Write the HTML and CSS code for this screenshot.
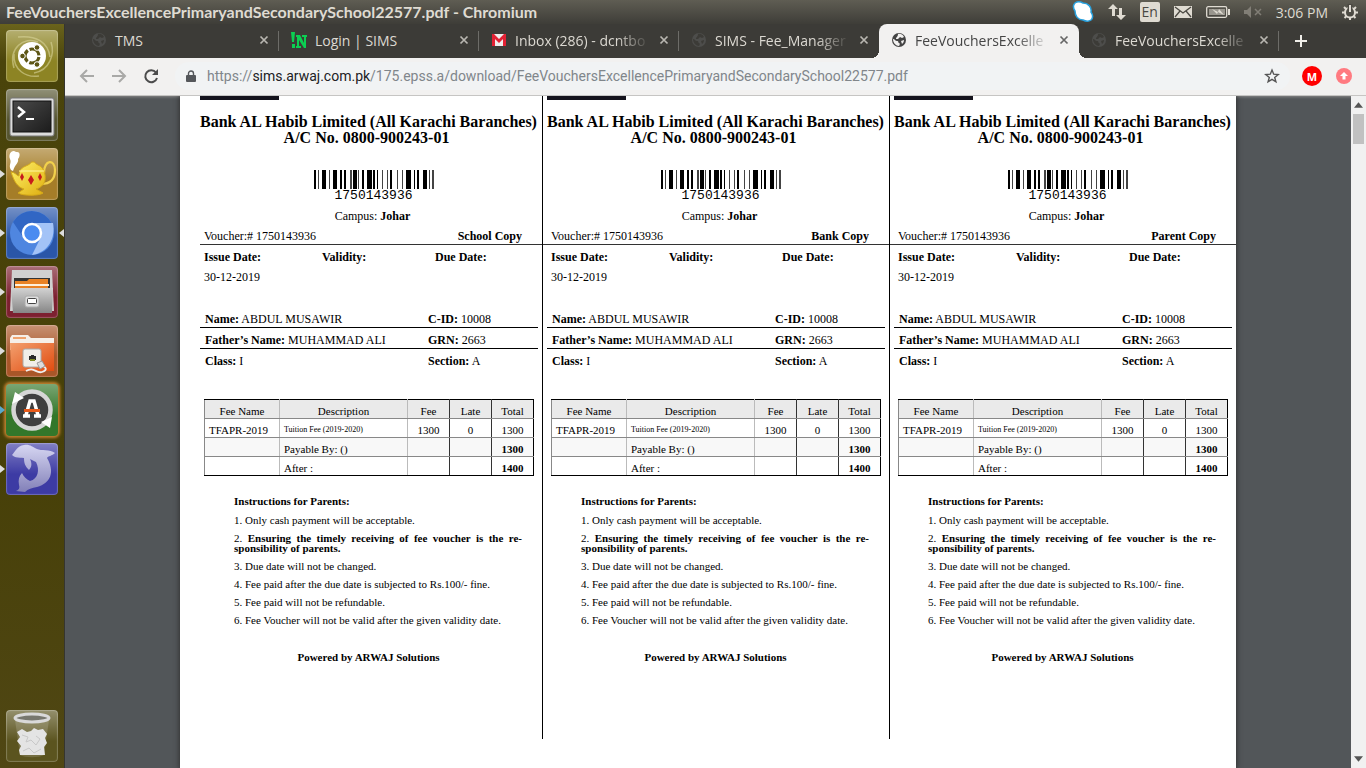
FILE: index.html
```html
<!DOCTYPE html>
<html lang="en">
<head>
<meta charset="utf-8">
<title>FeeVouchersExcellencePrimaryandSecondarySchool22577.pdf</title>
<link rel="stylesheet" href="styles.css">
</head>
<body>
<svg class="defs" aria-hidden="true">
  <defs>
    <linearGradient id="steel" x1="0" y1="0" x2="0" y2="1"><stop offset="0" stop-color="#d2d2d2"/><stop offset="1" stop-color="#868686"/></linearGradient>
    <linearGradient id="screen" x1="0" y1="0" x2="1" y2="1"><stop offset="0" stop-color="#4a4a4a"/><stop offset="1" stop-color="#1c1c1c"/></linearGradient>
    <linearGradient id="gold" x1="0" y1="0" x2="1" y2="1"><stop offset="0" stop-color="#fff36a"/><stop offset="1" stop-color="#dfae10"/></linearGradient>
    <linearGradient id="orange" x1="0" y1="0" x2="1" y2="1"><stop offset="0" stop-color="#f3a06f"/><stop offset="1" stop-color="#e04c10"/></linearGradient>
    <linearGradient id="whale" x1="0" y1="0" x2="0" y2="1"><stop offset="0" stop-color="#d6d6f2"/><stop offset="1" stop-color="#8280b8"/></linearGradient>
    <symbol id="globe" viewBox="0 0 16 16"><circle cx="8" cy="8" r="7" fill="currentColor"/><path class="land" d="M2 7c2 0 2 2 4 2s1 2 2 2 1 2 0 3c-3 0-6-3-6-7zM7 2c2-.6 5 .5 6 3l-2 1-2-1-2 2H5c0-2 2-2 2-5zM10 9l3-1c0 2-1 3-2 4z"/></symbol>
    <symbol id="cross" viewBox="0 0 10 10"><path d="M1.500 1.500l7 7M8.500 1.500l-7 7" stroke="currentColor" stroke-width="1.700" fill="none"/></symbol>
    <symbol id="barcode" viewBox="0 0 120 19" preserveAspectRatio="none">
      <path d="M0 0h2v19H0zM8 0h4v19H8zM19 0h4v19h-4zM26 0h2v19h-2zM30 0h2v19h-2zM39 0h4v19h-4zM48 0h2v19h-2zM53 0h5v19h-5zM59 0h2v19h-2zM63 0h1v19h-1zM76 0h2v19h-2zM92 0h5v19h-5zM100 0h1v19h-1zM103 0h2v19h-2zM109 0h4v19h-4z" fill="#000"/>
      <path d="M4 0h1v19H4zM15 0h1v19h-1zM36 0h2v19h-2zM44 0h1v19h-1zM68 0h1v19h-1zM73 0h1v19h-1zM83 0h1v19h-1zM88 0h1v19h-1zM115 0h1v19h-1zM118 0h2v19h-2z" fill="#444"/>
    </symbol>
  </defs>
</svg>

<header class="panel">
  <span class="panel-title">FeeVouchersExcellencePrimaryandSecondarySchool22577.pdf - Chromium</span>
  <div class="indicators">
    <svg width="22" height="22" viewBox="0 0 22 22"><path d="M3 2c3-2 6-1 8 0 5 0 9 4 8 9 2 3 2 6 0 8-3 2-6 1-8 0-5 0-8-4-8-9-2-3-2-6 0-8z" fill="#fff" stroke="#29a0dc" stroke-width="1.500"/></svg>
    <svg width="18" height="18" viewBox="0 0 18 18" fill="#dfdbd2"><path d="M5 1l5 5H7v7H4V6H0zM13 17l-5-5h3V5h3v7h4z"/></svg>
    <span class="lang">En</span>
    <svg width="18" height="12" viewBox="0 0 18 12"><path fill="#dfdbd2" d="M0 0h18v12H0z"/><path d="M1 1l8 6 8-6M1 11l5-6M17 11l-5-6" fill="none" stroke="#4a4842" stroke-width="1.300"/></svg>
    <svg width="24" height="12" viewBox="0 0 24 12"><rect x=".7" y=".7" width="20" height="10.600" rx="1.500" fill="none" stroke="#dfdbd2" stroke-width="1.300"/><path fill="#99968e" d="M3 3h16v6H3z"/><path fill="#dfdbd2" d="M22 3h2v6h-2zM6 3l6 3 1-3 5 6-6-3-1 2z"/></svg>
    <svg width="18" height="12" viewBox="0 0 18 12"><path d="M0 4h3l4-4v12L3 8H0z" fill="#817e76"/><path d="M11 3l6 6M17 3l-6 6" stroke="#817e76" stroke-width="1.500"/></svg>
    <time class="clock">3:06 PM</time>
    <svg width="16" height="16" viewBox="0 0 16 16"><circle cx="8" cy="8.500" r="5" fill="none" stroke="#dfdbd2" stroke-width="2"/><path d="M5.500 0h5v7h-5z" fill="#4c4a43"/><path d="M8 1v7M0 8.500h3M13 8.500h3M2.500 14l2-2M13.500 14l-2-2M8 14v2M2 3l2 2M14 3l-2 2" stroke="#dfdbd2" stroke-width="2"/></svg>
  </div>
</header>

<div class="desktop">
  <nav class="launcher" aria-label="Launcher">
    <button class="tile dash" aria-label="Dash"><svg viewBox="0 0 52 52"><path d="M8 38C2 18 18 6 32 12M45 12c4 12-1 28-17 31M12 7c18-2 30 5 32 20M8 24c-1 16 12 24 25 22" fill="none" stroke="#d8d49a" stroke-width="1.500" opacity=".6"/><circle cx="26" cy="26" r="14" fill="#fff"/><circle cx="26" cy="26" r="7" fill="none" stroke="#5d5514" stroke-width="3.200" stroke-dasharray="12.660 2" stroke-dashoffset="-1"/><g fill="#5d5514" stroke="#fff" stroke-width="1"><circle cx="16.500" cy="26" r="2.800"/><circle cx="31" cy="17.500" r="2.800"/><circle cx="31" cy="34.500" r="2.800"/></g></svg></button>
    <button class="tile term" aria-label="Terminal"><svg viewBox="0 0 52 52"><rect x="4" y="9" width="44" height="38" rx="2" fill="#dcdcdc" stroke="#777"/><rect x="7" y="12" width="38" height="31" fill="url(#screen)" stroke="#111"/><path d="M12 18l6 5-6 5" fill="none" stroke="#fff" stroke-width="2.500"/><path d="M20 30h8" stroke="#fff" stroke-width="2"/></svg></button>
    <button class="tile lamp running" aria-label="Teapot"><svg viewBox="0 0 52 52"><path d="M5 22c-3-5 1-7-1-11C2 6 6 1 10 4c5-1 4 5 2 7 1 4-3 5-5 12z" fill="#fff"/><path d="M38 25c0-14 11-14 11-3 0 9-5 14-14 14" fill="none" stroke="#f1d04c" stroke-width="2.200"/><path d="M5 24c4 0 6 4 8 4 0-8 5-9 9-11 4-2 2-3 5-3s1 1 5 3c5 2 8 8 7 15-1 5-5 8-9 9l7 4c-4 3-20 3-25 0l6-4C11 39 8 33 5 24z" fill="url(#gold)" stroke="#d6aa18"/><path d="M13 23h25" stroke="#fff7a0" stroke-width="1"/><path d="M16 25l2 4-2 4-2-4zM25 27l3 5-3 5-3-5zM34 25l2 4-2 4-2-4z" fill="#c71b1b"/></svg></button>
    <button class="tile chrome running focused" aria-label="Chromium"><svg viewBox="0 0 52 52"><circle cx="26" cy="26" r="22" fill="#4f86e0"/><path d="M7 15a22 22 0 0 1 39 2H26a10 10 0 0 0-9 13z" fill="#3166c4"/><path d="M26 16h21c3 15-5 30-21 32l9-18a10 10 0 0 0-9-14z" fill="#a3c3f7"/><circle cx="26" cy="26" r="9" fill="#4a8bf0" stroke="#fff" stroke-width="2.500"/></svg></button>
    <button class="tile files running" aria-label="Files"><svg viewBox="0 0 52 52"><path d="M6 4h40l2 41H4z" fill="#d0d0d0"/><path d="M8 12h36v12H8z" fill="#333"/><path d="M9 15h12l2-2h19v10H9z" fill="#e98224"/><path d="M9 18h34v2H9z" fill="#fff0db"/><path d="M5 22h42l-1 25H7z" fill="url(#steel)"/><rect x="19" y="30" width="14" height="11" rx="2" fill="#ddd" stroke="#aaa"/><rect x="21.500" y="32.500" width="9" height="5" rx="1" fill="#fff" stroke="#444"/></svg></button>
    <button class="tile net running" aria-label="Network folder"><svg viewBox="0 0 52 52"><path d="M4 13l2-3h16l3 3h23v12H4z" fill="#f6efe8"/><path d="M7 12h13v2H7z" fill="#efa36e"/><path d="M4 18h44v28H5z" fill="url(#orange)"/><rect x="17" y="24" width="18" height="18" rx="2" fill="#f1eee9" stroke="#aaa"/><path d="M23 35v-4h2v-1h3v1h2v4z" fill="#2a2a2a"/><path d="M24 34h5v2h-5z" fill="#7d8b24"/><path d="M20 46c8-5 10 3 16 1s4-5 0-6" fill="none" stroke="#eee" stroke-width="1.800"/><path d="M31 38l5-2 3 5-5 3z" fill="#ddd" stroke="#999"/></svg></button>
    <button class="tile update pending" aria-label="Software Updater"><svg viewBox="0 0 52 52"><circle cx="26" cy="26" r="18.500" fill="#3f3f3f" stroke="#d6d6d6" stroke-width="4.500"/><path d="M6 20l3-12 9 6zM46 33l-2 11-9-6z" fill="#fff"/><path d="M20 31l4-14h4l4 14M17 32h7M28 32h7" fill="none" stroke="#fff" stroke-width="3.500"/><path d="M18 25h16v3H18z" fill="#e85b1b"/></svg></button>
    <button class="tile dolphin running" aria-label="MySQL Workbench"><svg viewBox="0 0 52 52"><path d="M6 12c3-3 5-9 12-10 6-1 8 2 13 4 4 2 13 0 18 4-3 3-7 3-8 5 8 14 4 25-10 29-5 1-9 2-12 5l-9-1c3-1 4-3 3-6-1-5 0-9 3-12 2 4 4 6 8 8 8-2 10-11 6-19l-6-3c2 4 2 8-1 11-4-4-5-7-5-12-4-1-8 1-12-3z" fill="url(#whale)"/></svg></button>
    <button class="tile trash" aria-label="Trash"><svg viewBox="0 0 52 52"><path d="M9 10h34l-5 35c-5 3-19 3-24 0z" fill="#fff" opacity=".15"/><path d="M11 22l5-3 5 3 4-1 3-3 4 2 5-1 4 5-2 4 2 5-3 4 1 8H14l-1-5 2-4-4-5 3-4z" fill="#e4e4e4"/><path d="M16 25l6 2-2 5 5-2 5 5 4-6-4-3M17 41l6-3 5 5 7-4" fill="none" stroke="#c8c8c8"/><ellipse cx="26" cy="8" rx="17" ry="4" fill="#77776e" stroke="#d9d9d9" stroke-width="3"/></svg></button>
  </nav>

  <main class="browser">
    <div class="tabs" role="tablist">
      <div class="tab" role="tab"><svg class="favicon dim"><use href="#globe"/></svg><span class="tab-name">TMS</span><button class="close" aria-label="Close TMS"><svg><use href="#cross"/></svg></button></div>
      <div class="tab" role="tab"><svg class="favicon" viewBox="0 0 16 16"><path d="M0 0h4l-1 10H1zM1 12h3v4H1zM5 3h4l4 8V5h-2V3h5v2h-1v11h-2L8 8v6h2v2H5v-2h1V5H5z" fill="#0bcf52"/></svg><span class="tab-name">Login | SIMS</span><button class="close" aria-label="Close Login"><svg><use href="#cross"/></svg></button></div>
      <div class="tab" role="tab"><svg class="favicon" viewBox="0 0 16 16"><path d="M1 2h14v12H1z" fill="#eee"/><path d="M1 14V2h2l5 5 5-5h2v12h-3V7L8 11 4 7v7z" fill="#e22134"/></svg><span class="tab-name faded">Inbox (286) - dcntbo</span><button class="close" aria-label="Close Inbox"><svg><use href="#cross"/></svg></button></div>
      <div class="tab before-active" role="tab"><svg class="favicon dim"><use href="#globe"/></svg><span class="tab-name faded">SIMS - Fee_Manager</span><button class="close" aria-label="Close SIMS"><svg><use href="#cross"/></svg></button></div>
      <div class="tab active" role="tab" aria-selected="true"><svg class="favicon"><use href="#globe"/></svg><span class="tab-name faded">FeeVouchersExcelle</span><button class="close" aria-label="Close voucher"><svg><use href="#cross"/></svg></button></div>
      <div class="tab" role="tab"><svg class="favicon dim"><use href="#globe"/></svg><span class="tab-name faded">FeeVouchersExcelle</span><button class="close" aria-label="Close second voucher"><svg><use href="#cross"/></svg></button></div>
      <button class="new-tab" aria-label="New tab"><svg width="12" height="12" viewBox="0 0 12 12"><path d="M6 0v12M0 6h12" stroke="#f0eee9" stroke-width="2"/></svg></button>
    </div>
    <div class="toolbar">
      <button class="tool" aria-label="Back"><svg viewBox="0 0 16 16"><path d="M15 8H2M8 2L2 8l6 6" fill="none" stroke="#a9a9a7" stroke-width="2"/></svg></button>
      <button class="tool" aria-label="Forward"><svg viewBox="0 0 16 16"><path d="M1 8h13M8 2l6 6-6 6" fill="none" stroke="#a9a9a7" stroke-width="2"/></svg></button>
      <button class="tool" aria-label="Reload"><svg viewBox="0 0 16 16"><path d="M13 4.500A6 6 0 1 0 14 10" fill="none" stroke="#4c4c4c" stroke-width="2"/><path d="M15 1v6H9z" fill="#4c4c4c"/></svg></button>
      <div class="omnibox">
        <svg width="10" height="12" viewBox="0 0 10 12"><path d="M1 5h8q1 0 1 1v5q0 1-1 1H1q-1 0-1-1V6q0-1 1-1z" fill="#54575b"/><path d="M2.500 6V3.500a2.500 2.500 0 0 1 5 0V6" fill="none" stroke="#54575b" stroke-width="1.400"/></svg>
        <a class="url" href="#"><span>https://</span><b>sims.arwaj.com.pk</b>/175.epss.a/download/FeeVouchersExcellencePrimaryandSecondarySchool22577.pdf</a>
        <button class="star" aria-label="Bookmark"><svg viewBox="0 0 16 16"><path d="M8 2l1.700 4.200 4.500.3-3.500 2.900 1.200 4.400L8 11.300l-3.900 2.500 1.200-4.400-3.500-2.900 4.500-.3z" fill="none" stroke="#555" stroke-width="1.400"/></svg></button>
      </div>
      <button class="avatar" aria-label="Account">M</button>
      <button class="menu" aria-label="Update"><svg viewBox="0 0 16 16"><circle cx="8" cy="8" r="8" fill="#ff7a80"/><path d="M8 4l4 4H9.500v3.500h-3V8H4z" fill="#fff"/></svg></button>
    </div>

    <div class="viewer">
      <div class="canvas">
      <article class="sheet">
        <section class="voucher">
          <div class="photo"></div>
          <h2>Bank AL Habib Limited (All Karachi Baranches)<br>A/C No. 0800-900243-01</h2>
          <div class="code"><svg><use href="#barcode"/></svg><span>1750143936</span></div>
          <p class="campus">Campus: <b>Johar</b></p>
          <div class="copy"><span>Voucher:# 1750143936</span><b>School Copy</b></div>
          <div class="dates"><b>Issue Date:</b><b>Validity:</b><b>Due Date:</b><span>30-12-2019</span></div>
          <div class="student">
            <div><span><b>Name:</b> ABDUL MUSAWIR</span><span><b>C-ID:</b> 10008</span></div>
            <div><span><b>Father’s Name:</b> MUHAMMAD ALI</span><span><b>GRN:</b> 2663</span></div>
            <div><span><b>Class:</b> I</span><span><b>Section:</b> A</span></div>
          </div>
          <table class="fees">
            <thead><tr><th>Fee Name</th><th>Description</th><th>Fee</th><th>Late</th><th>Total</th></tr></thead>
            <tbody>
              <tr><td>TFAPR-2019</td><td class="tiny">Tuition Fee (2019-2020)</td><td>1300</td><td>0</td><td>1300</td></tr>
              <tr class="shade"><td></td><td>Payable By: ()</td><td></td><td></td><td><b>1300</b></td></tr>
              <tr><td></td><td>After :</td><td></td><td></td><td><b>1400</b></td></tr>
            </tbody>
          </table>
          <div class="notes">
            <p class="heading">Instructions for Parents:</p>
            <p>1. Only cash payment will be acceptable.</p>
            <p class="stretch">2. <b>Ensuring the timely receiving of fee voucher is the re&shy;sponsibility of parents.</b></p>
            <p>3. Due date will not be changed.</p>
            <p>4. Fee paid after the due date is subjected to Rs.100/- fine.</p>
            <p>5. Fee paid will not be refundable.</p>
            <p>6. Fee Voucher will not be valid after the given validity date.</p>
          </div>
          <p class="powered">Powered by ARWAJ Solutions</p>
        </section>
        <section class="voucher">
          <div class="photo"></div>
          <h2>Bank AL Habib Limited (All Karachi Baranches)<br>A/C No. 0800-900243-01</h2>
          <div class="code"><svg><use href="#barcode"/></svg><span>1750143936</span></div>
          <p class="campus">Campus: <b>Johar</b></p>
          <div class="copy"><span>Voucher:# 1750143936</span><b>Bank Copy</b></div>
          <div class="dates"><b>Issue Date:</b><b>Validity:</b><b>Due Date:</b><span>30-12-2019</span></div>
          <div class="student">
            <div><span><b>Name:</b> ABDUL MUSAWIR</span><span><b>C-ID:</b> 10008</span></div>
            <div><span><b>Father’s Name:</b> MUHAMMAD ALI</span><span><b>GRN:</b> 2663</span></div>
            <div><span><b>Class:</b> I</span><span><b>Section:</b> A</span></div>
          </div>
          <table class="fees">
            <thead><tr><th>Fee Name</th><th>Description</th><th>Fee</th><th>Late</th><th>Total</th></tr></thead>
            <tbody>
              <tr><td>TFAPR-2019</td><td class="tiny">Tuition Fee (2019-2020)</td><td>1300</td><td>0</td><td>1300</td></tr>
              <tr class="shade"><td></td><td>Payable By: ()</td><td></td><td></td><td><b>1300</b></td></tr>
              <tr><td></td><td>After :</td><td></td><td></td><td><b>1400</b></td></tr>
            </tbody>
          </table>
          <div class="notes">
            <p class="heading">Instructions for Parents:</p>
            <p>1. Only cash payment will be acceptable.</p>
            <p class="stretch">2. <b>Ensuring the timely receiving of fee voucher is the re&shy;sponsibility of parents.</b></p>
            <p>3. Due date will not be changed.</p>
            <p>4. Fee paid after the due date is subjected to Rs.100/- fine.</p>
            <p>5. Fee paid will not be refundable.</p>
            <p>6. Fee Voucher will not be valid after the given validity date.</p>
          </div>
          <p class="powered">Powered by ARWAJ Solutions</p>
        </section>
        <section class="voucher">
          <div class="photo"></div>
          <h2>Bank AL Habib Limited (All Karachi Baranches)<br>A/C No. 0800-900243-01</h2>
          <div class="code"><svg><use href="#barcode"/></svg><span>1750143936</span></div>
          <p class="campus">Campus: <b>Johar</b></p>
          <div class="copy"><span>Voucher:# 1750143936</span><b>Parent Copy</b></div>
          <div class="dates"><b>Issue Date:</b><b>Validity:</b><b>Due Date:</b><span>30-12-2019</span></div>
          <div class="student">
            <div><span><b>Name:</b> ABDUL MUSAWIR</span><span><b>C-ID:</b> 10008</span></div>
            <div><span><b>Father’s Name:</b> MUHAMMAD ALI</span><span><b>GRN:</b> 2663</span></div>
            <div><span><b>Class:</b> I</span><span><b>Section:</b> A</span></div>
          </div>
          <table class="fees">
            <thead><tr><th>Fee Name</th><th>Description</th><th>Fee</th><th>Late</th><th>Total</th></tr></thead>
            <tbody>
              <tr><td>TFAPR-2019</td><td class="tiny">Tuition Fee (2019-2020)</td><td>1300</td><td>0</td><td>1300</td></tr>
              <tr class="shade"><td></td><td>Payable By: ()</td><td></td><td></td><td><b>1300</b></td></tr>
              <tr><td></td><td>After :</td><td></td><td></td><td><b>1400</b></td></tr>
            </tbody>
          </table>
          <div class="notes">
            <p class="heading">Instructions for Parents:</p>
            <p>1. Only cash payment will be acceptable.</p>
            <p class="stretch">2. <b>Ensuring the timely receiving of fee voucher is the re&shy;sponsibility of parents.</b></p>
            <p>3. Due date will not be changed.</p>
            <p>4. Fee paid after the due date is subjected to Rs.100/- fine.</p>
            <p>5. Fee paid will not be refundable.</p>
            <p>6. Fee Voucher will not be valid after the given validity date.</p>
          </div>
          <p class="powered">Powered by ARWAJ Solutions</p>
        </section>
      </article>
      </div>
      <div class="scrollbar">
        <svg width="9" height="6" viewBox="0 0 8 5"><path d="M0 5l4-5 4 5z" fill="#555"/></svg>
        <div class="thumb"></div>
        <svg width="9" height="6" viewBox="0 0 8 5"><path d="M0 0l4 5 4-5z" fill="#555"/></svg>
      </div>
    </div>
  </main>
</div>
</body>
</html>
```

FILE: styles.css
```css
* { box-sizing: border-box; }
body {
  margin: 0;
  height: 100vh;
  display: flex;
  flex-direction: column;
  overflow: hidden;
  font-family: "Open Sans", "Noto Sans", sans-serif;
}
button { border: 0; padding: 0; background: none; font: inherit; display: flex; align-items: center; justify-content: center; }
p, h2 { margin: 0; }
.defs { position: absolute; width: 0; height: 0; }

.panel {
  height: 24px;
  flex: none;
  display: flex;
  align-items: center;
  justify-content: space-between;
  padding: 0 8px 0 6px;
  background: linear-gradient(#5f5d53, #3e3d38);
  color: #dfdbd2;
}
.panel-title { font: 700 16px/24px Lato, "Open Sans", sans-serif; }
.indicators { display: flex; align-items: center; gap: 14px; font-size: 14px; }
.lang { background: #dfdbd2; color: #4a4842; width: 20px; line-height: 20px; text-align: center; border-radius: 2px; }

.desktop { flex: 1; min-height: 0; display: flex; }
.launcher {
  width: 65px;
  flex: none;
  display: flex;
  flex-direction: column;
  gap: 7px;
  padding: 6px;
  background: linear-gradient(#6a631c, #4a440b 5%, #474008 60%, #504714);
  border-right: 1px solid #35352f;
}
.tile { position: relative; width: 52px; height: 52px; flex: none; border-radius: 4px; box-shadow: inset 0 0 1px 1px rgba(255,255,255,.25); background-image: linear-gradient(rgba(255,255,255,.35), rgba(255,255,255,0) 60%); }
.tile svg { width: 52px; height: 52px; }
.dash { background-color: #8d8424; }
.term { background-color: #55542f; }
.lamp { background-color: #a57d28; }
.chrome { background-color: #2a56a8; }
.files { background-color: #7d2030; }
.net { background-color: #a95628; }
.update { background-color: #33772a; box-shadow: 0 0 3px 2px #c2802f; }
.dolphin { background-color: #3d3ba4; }
.trash { background-color: #5b541f; margin-top: auto; }
.running::before { content: ""; position: absolute; left: -6px; top: 22px; border: solid transparent; border-width: 4px 0 4px 5px; border-left-color: #ddd; }
.focused::after { content: ""; position: absolute; right: -6px; top: 22px; border: solid transparent; border-width: 4px 5px 4px 0; border-right-color: #ddd; }
.pending::before { content: ""; position: absolute; left: -6px; top: 22px; border: solid transparent; border-width: 4px 0 4px 5px; border-left-color: #5aa9cc; }

.browser { flex: 1; min-width: 0; display: flex; flex-direction: column; }
.tabs { height: 34px; flex: none; display: flex; background: #3c3b37; padding-left: 14px; }
.tab {
  position: relative;
  width: 200px;
  display: flex;
  align-items: center;
  gap: 8px;
  padding: 0 10px 2px 12px;
  color: #dcd9d2;
  font-size: 14px;
}
.tab:not(.active):not(.before-active)::after { content: ""; position: absolute; right: 0; top: 7px; bottom: 7px; width: 1px; background: #6d6c68; }
.favicon { width: 16px; height: 16px; flex: none; color: #444; }
.dim { color: #4d4d4b; --land: #3c3b37; }
.land { fill: var(--land, #f2f1f0); }
.tab-name { flex: 1; min-width: 0; white-space: nowrap; }
.faded { -webkit-mask-image: linear-gradient(90deg, #000 75%, transparent); mask-image: linear-gradient(90deg, #000 75%, transparent); }
.close { width: 11px; color: #b9b7b1; }
.close svg { width: 10px; height: 10px; }
.active { background: #f2f1f0; color: #454545; border-radius: 8px 8px 0 0; }
.active .close { color: #666; }
.active::before, .active::after { content: ""; position: absolute; bottom: 0; width: 8px; height: 8px; }
.active::before { left: -8px; background: radial-gradient(circle at 0 0, transparent 8px, #f2f1f0 8px); }
.active::after { right: -8px; background: radial-gradient(circle at 100% 0, transparent 8px, #f2f1f0 8px); }
.new-tab { width: 44px; }

.toolbar { height: 38px; flex: none; display: flex; align-items: center; padding: 0 14px 1px; background: #f2f1f0; border-bottom: 1px solid #c6c5c3; }
.tool { width: 16px; height: 16px; margin-right: 16px; }
.tool svg, .star svg, .menu svg { width: 16px; height: 16px; }
.omnibox { flex: 1; min-width: 0; height: 28px; display: flex; align-items: center; gap: 11px; margin-right: 12px; padding: 0 10px 0 11px; border-radius: 14px; background: #f1f3f4; }
.url { flex: 1; font: 14px/20px Roboto, "Open Sans", sans-serif; color: #80868b; text-decoration: none; white-space: nowrap; }
.url b { font-weight: 400; color: #202124; }
.avatar { width: 20px; height: 20px; margin-right: 14px; border-radius: 50%; background: #f00; color: #fff; font-size: 11px; font-weight: 700; }
.menu { width: 16px; height: 16px; }

.viewer { flex: 1; min-height: 0; display: flex; background: #525659; }
.canvas { flex: 1; min-width: 0; overflow: hidden; padding: 0 115px; box-shadow: inset 0 3px 3px -2px #888; }
.sheet { min-height: 100%; display: flex; align-items: flex-start; padding-left: 16px; background: #fff; box-shadow: 0 0 5px 1px #333; color: #000; font: 12px/16px "Liberation Serif", serif; }
.voucher { flex: 1; min-width: 0; height: 643px; padding-left: 4px; border-right: 1px solid #000; }
.voucher:last-child { border-right: 0; }
.photo { width: 79px; height: 4px; background: #15131c; }
h2 { margin: 14px 9px 0 0; font-size: 16px; line-height: 16px; text-align: center; white-space: nowrap; }
.code { display: flex; flex-direction: column; align-items: center; margin: 24px 0 0 5px; font: 13px/13px "Liberation Mono", monospace; }
.code svg { width: 120px; height: 19px; }
.campus { margin: 6px 0 0 3px; text-align: center; }
.copy { display: flex; justify-content: space-between; margin: 4px 0 0 -4px; padding: 0 20px 0 8px; border-bottom: 1px solid #333; }
.voucher:first-child .copy { margin-left: 0; padding-left: 4px; }
.dates { display: grid; grid-template-columns: 118px 113px 1fr; row-gap: 4px; margin-top: 4px; padding-left: 4px; }
.student { margin: 26px 4px 0 0; }
.student div { display: grid; grid-template-columns: 223px 1fr; padding-left: 5px; line-height: 16px; border-bottom: 1px solid #000; }
.student div + div { padding-top: 4px; }
.student div:last-child { border-bottom: 0; }
.fees { width: 330px; margin: 30px 0 0 4px; border-collapse: collapse; table-layout: fixed; font-size: 11px; line-height: 14px; }
.fees th, .fees td { height: 19px; padding: 4px 0 0; border: 1px solid #888; border-right-color: #bbb; font-weight: 400; text-align: center; }
.fees th { background: #eaeaea; border-top-color: #000; }
.fees th:nth-child(1) { width: 75px; }
.fees th:nth-child(2) { width: 128px; }
.fees tr > :nth-child(n+3) { border-right-color: #333; }
.fees tr > :last-child { border-right-color: #000; }
.fees tr:last-child td { border-bottom-color: #000; }
.fees td:first-child, .fees td:nth-child(2) { padding-left: 4px; text-align: left; }
.fees td.tiny { font-size: 8px; }
.shade { background: #f8f8f8; }
.notes { width: 288px; margin: 20px 0 0 34px; font-size: 11px; line-height: 10px; }
.notes p { margin-bottom: 8px; }
.notes .heading { margin-bottom: 9px; font-weight: 700; }
.notes .stretch { text-align: justify; }
.powered { margin: 24px 5px 0 0; font-size: 11px; font-weight: 700; text-align: center; }

.scrollbar { width: 15px; flex: none; display: flex; flex-direction: column; align-items: center; padding: 6px 0; background: #f1f1f1; }
.thumb { width: 11px; height: 30px; margin: 6px 0 auto; background: #c1c1c1; }
```
